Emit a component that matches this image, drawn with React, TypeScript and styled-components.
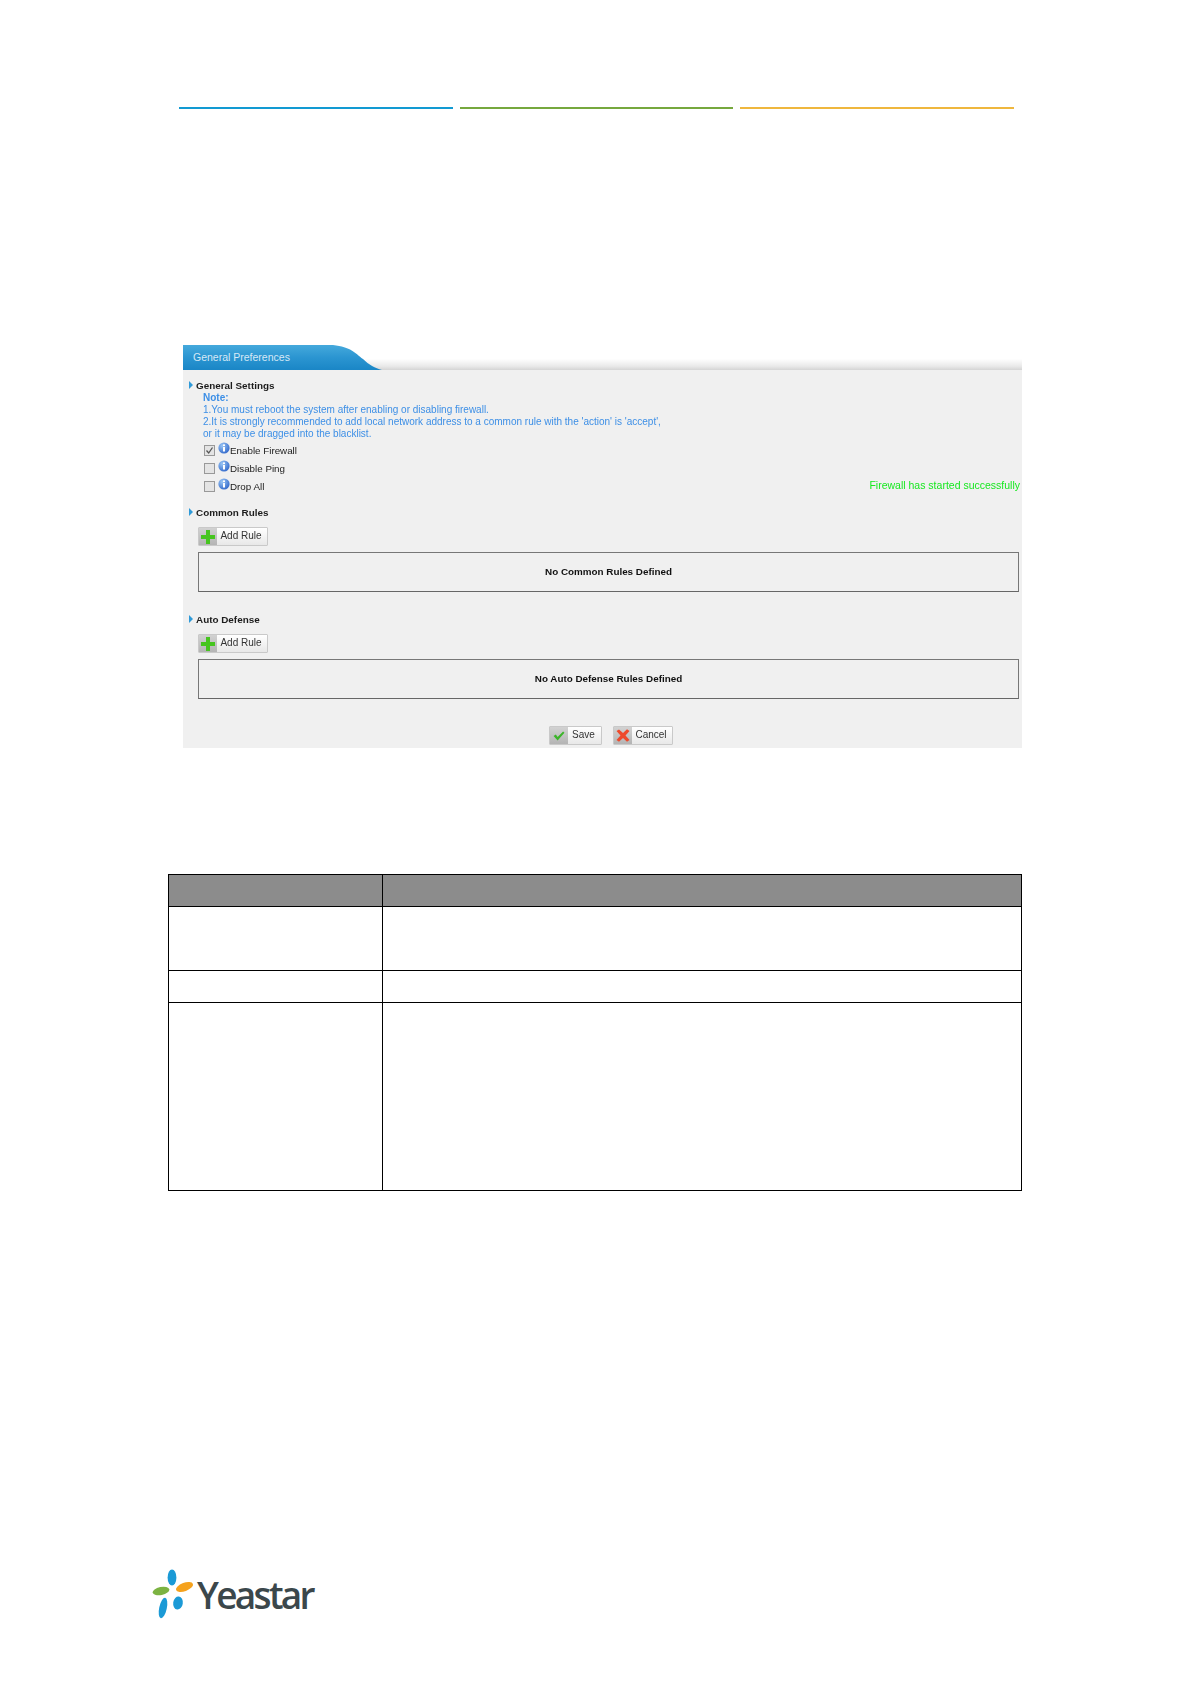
import React from "react";
import styled, { createGlobalStyle } from "styled-components";

const Global = createGlobalStyle`
  html, body { margin: 0; padding: 0; background: #fff; }
  body { font-family: "Liberation Sans", Arial, sans-serif; }
`;

const Page = styled.div`
  width: 1190px;
  height: 1684px;
  overflow: hidden;
  display: flex;
  flex-direction: column;
  padding-top: 107px;
  box-sizing: border-box;
  background: #fff;
`;

const Rules = styled.div`
  display: flex;
  gap: 7px;
  margin-left: 179px;
  width: 835px;
`;
const RuleLine = styled.div<{ $c: string }>`
  flex: 1;
  height: 2px;
  background: ${(p) => p.$c};
`;

const Panel = styled.section`
  margin: 236px 0 0 183px;
  width: 839px;
  height: 403px;
  display: flex;
  flex-direction: column;
  background: #f0f0f0;
`;
const PanelHead = styled.div`
  height: 25px;
  flex: none;
  background: linear-gradient(#fff 0, #fff 55%, #e9e9e9 85%, #d4d4d4 100%);
`;
const Tab = styled.div`
  width: 199px;
  height: 25px;
  box-sizing: border-box;
  padding: 6px 0 0 10px;
  font-size: 10.5px;
  line-height: 13px;
  color: #d6e9f6;
  background: linear-gradient(#45a9dc 0, #2b95d1 50%, #1a86c6 100%);
  clip-path: path("M0 0 H150 C168 2 172 8 180 14 C186 20 192 23 199 25 H0 Z");
`;
const PanelBody = styled.div`
  flex: 1;
  display: flex;
  flex-direction: column;
  padding: 8px 3px 0 6px;
  position: relative;
  filter: blur(0.3px);
`;
const SectionTitle = styled.div`
  display: flex;
  align-items: center;
  gap: 3px;
  height: 14px;
  font-size: 9.9px;
  font-weight: bold;
  color: #1c1c1c;
`;
const Arrow = styled.span`
  width: 0;
  height: 0;
  border-left: 4px solid #2f9ad8;
  border-top: 4px solid transparent;
  border-bottom: 4px solid transparent;
`;
const Note = styled.div`
  margin: 0 0 0 14px;
  font-size: 10px;
  line-height: 11.7px;
  color: #3d8fe6;
`;
const NoteTitle = styled.div`
  font-weight: bold;
  margin-bottom: 0.5px;
`;
const Options = styled.div`
  margin: 2px 0 0 15px;
  display: flex;
  flex-direction: column;
  gap: 1px;
`;
const Option = styled.div`
  height: 17px;
  display: flex;
  align-items: center;
  font-size: 9.8px;
  color: #222;
`;
const Check = styled.span<{ $on?: boolean }>`
  width: 9px;
  height: 9px;
  flex: none;
  border: 1px solid #999;
  background: #e4e4e4;
  margin-right: 3px;
  display: flex;
  margin-top: 1px;
  svg { display: ${(p) => (p.$on ? "block" : "none")}; }
`;
const InfoWrap = styled.span`
  display: flex;
  width: 12px;
  height: 12px;
  margin: -4px 0 0 0;
`;
const OptionLabel = styled.span`
  margin-left: 0;
  margin-top: 2px;
`;
const Status = styled.div`
  position: absolute;
  right: 2px;
  top: 109px;
  font-size: 10.5px;
  line-height: 13px;
  color: #16e81f;
`;
const Section = styled.div<{ $gap: number }>`
  margin-top: ${(p) => p.$gap}px;
`;
const ToolBtn = styled.div<{ $w: number }>`
  display: flex;
  align-items: stretch;
  width: ${(p) => p.$w}px;
  height: 19px;
  box-sizing: border-box;
  border: 1px solid #c9c9c9;
  border-radius: 1px;
  background: linear-gradient(#fff, #e8e8e8);
  font-size: 10px;
  color: #333;
`;
const AddBtn = styled(ToolBtn)`
  margin: 8px 0 0 9px;
`;
const BtnIcon = styled.span`
  width: 18px;
  flex: none;
  display: flex;
  align-items: center;
  justify-content: center;
  background: linear-gradient(#d2d2d2, #b4b4b4);
`;
const BtnText = styled.span`
  flex: 1;
  text-align: center;
  line-height: 16px;
  padding-right: 2px;
`;
const EmptyBox = styled.div`
  margin: 6px 0 0 9px;
  width: 821px;
  height: 40px;
  box-sizing: border-box;
  border: 1px solid #777;
  border-bottom-color: #666;
  display: flex;
  align-items: center;
  justify-content: center;
  padding-bottom: 1px;
  font-size: 9.85px;
  font-weight: bold;
  color: #111;
`;
const Actions = styled.div`
  margin: 27px 0 0 360px;
  display: flex;
  gap: 11px;
`;

const DataTable = styled.table`
  margin: 126px 0 0 168px;
  width: 854px;
  height: 317px;
  border-collapse: collapse;
  table-layout: fixed;
  border: 1px solid #000;
  td, th { border: 1px solid #000; padding: 0; }
  th { background: #8c8c8c; height: 31px; }
`;
const Row = styled.tr<{ $h: number }>`
  height: ${(p) => p.$h}px;
`;

const Logo = styled.div`
  margin: 371px 0 0 152px;
  display: flex;
  align-items: flex-start;
  height: 60px;
`;
const LogoMark = styled.svg`
  width: 44px;
  height: 60px;
  flex: none;
`;
const LogoWord = styled.span`
  margin: 8px 0 0 1px;
  font-family: "Open Sans", sans-serif;
  font-weight: 600;
  font-size: 37px;
  line-height: 50px;
  letter-spacing: -2.7px;
  color: #3b474b;
`;

const Info = () => (
  <InfoWrap>
    <svg width="12" height="12" viewBox="0 0 12 12">
      <defs>
        <radialGradient id="ig" cx="35%" cy="30%" r="80%">
          <stop offset="0" stopColor="#9cc7f5" />
          <stop offset="1" stopColor="#2a62c8" />
        </radialGradient>
      </defs>
      <circle cx="6" cy="6" r="5.6" fill="url(#ig)" />
      <rect x="5" y="5" width="2" height="4.5" fill="#fff" />
      <rect x="5" y="2.4" width="2" height="1.7" fill="#fff" />
    </svg>
  </InfoWrap>
);

const PlusIcon = () => (
  <svg width="14" height="14" viewBox="0 0 14 14">
    <path d="M5 0h4v5h5v4H9v5H5V9H0V5h5z" fill="#46c51f" />
  </svg>
);
const TickIcon = () => (
  <svg width="12" height="10" viewBox="0 0 13 11">
    <path d="M0.5 5.5 L3 3.8 L5 6.5 L11 0.5 L12.5 2 L5 10.5 Z" fill="#3cb52a" />
  </svg>
);
const CrossIcon = () => (
  <svg width="14" height="13" viewBox="0 0 14 13">
    <path d="M0.5 2 L3 0.5 L7 4 L11 0.3 L13.5 2 L9.5 6.5 L13.5 11 L11 12.7 L7 9 L3 12.7 L0.5 11 L4.5 6.5 Z" fill="#ee4a2c" />
  </svg>
);

const Opt = ({ label, on }: { label: string; on?: boolean }) => (
  <Option>
    <Check $on={on}>
      <svg width="9" height="9" viewBox="0 0 9 9">
        <path d="M1.5 4.5 L3.7 7 L7.5 1.5" stroke="#555" strokeWidth="1.3" fill="none" />
      </svg>
    </Check>
    <Info />
    <OptionLabel>{label}</OptionLabel>
  </Option>
);

export default function App() {
  return (
    <Page>
      <Global />
      <Rules>
        <RuleLine $c="#129ad2" />
        <RuleLine $c="#76a83d" />
        <RuleLine $c="#efb73e" />
      </Rules>

      <Panel>
        <PanelHead>
          <Tab>General Preferences</Tab>
        </PanelHead>
        <PanelBody>
          <SectionTitle>
            <Arrow />
            General Settings
          </SectionTitle>
          <Note>
            <NoteTitle>Note:</NoteTitle>
            <div>1.You must reboot the system after enabling or disabling firewall.</div>
            <div>2.It is strongly recommended to add local network address to a common rule with the 'action' is 'accept',</div>
            <div>or it may be dragged into the blacklist.</div>
          </Note>
          <Options>
            <Opt label="Enable Firewall" on />
            <Opt label="Disable Ping" />
            <Opt label="Drop All" />
          </Options>
          <Status>Firewall has started successfully</Status>

          <Section $gap={11}>
            <SectionTitle>
              <Arrow />
              Common Rules
            </SectionTitle>
            <AddBtn $w={70}>
              <BtnIcon><PlusIcon /></BtnIcon>
              <BtnText>Add Rule</BtnText>
            </AddBtn>
            <EmptyBox>No Common Rules Defined</EmptyBox>
          </Section>

          <Section $gap={20}>
            <SectionTitle>
              <Arrow />
              Auto Defense
            </SectionTitle>
            <AddBtn $w={70}>
              <BtnIcon><PlusIcon /></BtnIcon>
              <BtnText>Add Rule</BtnText>
            </AddBtn>
            <EmptyBox>No Auto Defense Rules Defined</EmptyBox>
          </Section>

          <Actions>
            <ToolBtn $w={53}>
              <BtnIcon><TickIcon /></BtnIcon>
              <BtnText>Save</BtnText>
            </ToolBtn>
            <ToolBtn $w={60}>
              <BtnIcon><CrossIcon /></BtnIcon>
              <BtnText>Cancel</BtnText>
            </ToolBtn>
          </Actions>
        </PanelBody>
      </Panel>

      <DataTable>
        <colgroup>
          <col style={{ width: 214 }} />
          <col />
        </colgroup>
        <thead>
          <tr><th /><th /></tr>
        </thead>
        <tbody>
          <Row $h={64}><td /><td /></Row>
          <Row $h={32}><td /><td /></Row>
          <Row $h={188}><td /><td /></Row>
        </tbody>
      </DataTable>

      <Logo>
        <LogoMark viewBox="0 0 44 60">
          <ellipse cx="20" cy="15.5" rx="4.4" ry="8" fill="#1b9ad6" />
          <ellipse cx="32.5" cy="25" rx="9" ry="4.2" fill="#f5a21d" transform="rotate(-20 32.5 25)" />
          <ellipse cx="9" cy="29" rx="8.5" ry="4" fill="#7cb342" transform="rotate(-12 9 29)" />
          <ellipse cx="26" cy="41" rx="4.8" ry="6.6" fill="#1b9ad6" transform="rotate(8 26 41)" />
          <ellipse cx="11" cy="46" rx="3.8" ry="10.5" fill="#1b9ad6" transform="rotate(12 11 46)" />
        </LogoMark>
        <LogoWord>Yeastar</LogoWord>
      </Logo>
    </Page>
  );
}
